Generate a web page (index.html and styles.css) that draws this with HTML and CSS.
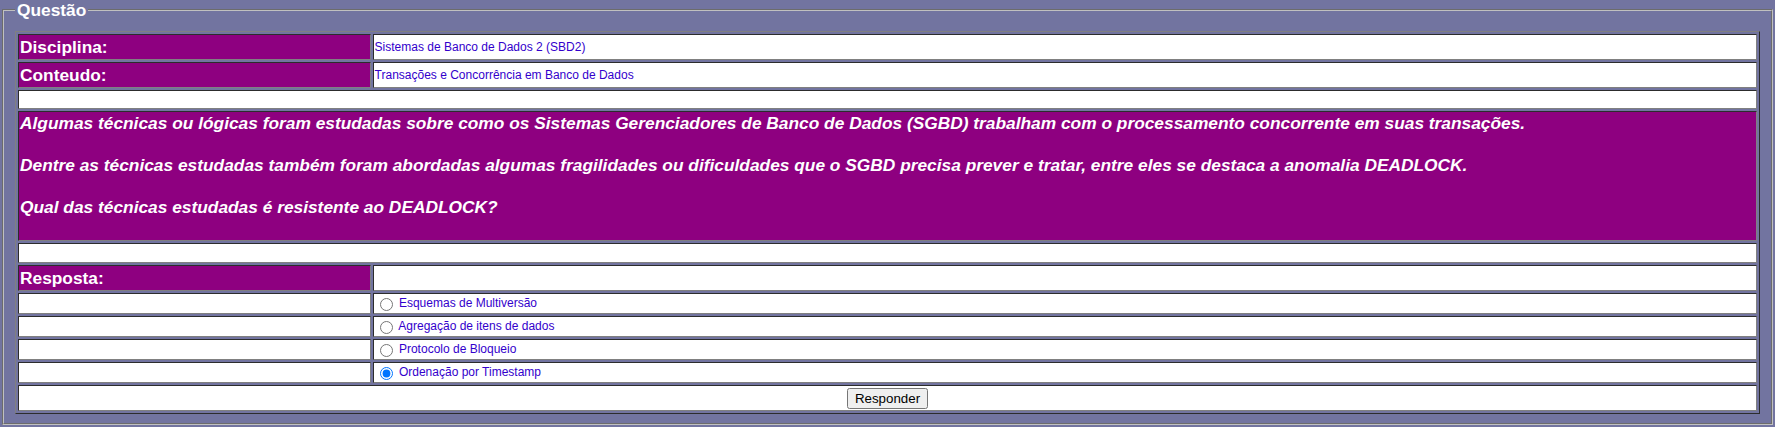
FILE: index.html
```html
<!DOCTYPE html>
<html lang="pt-BR">
<head>
<meta charset="utf-8">
<title>Questão</title>
<link rel="stylesheet" href="styles.css">
</head>
<body>
<fieldset class="box">
  <legend class="box-title">Questão</legend>
  <table class="quiz">
    <tr>
      <td class="lbl">Disciplina:</td>
      <td class="val">Sistemas de Banco de Dados 2 (SBD2)</td>
    </tr>
    <tr>
      <td class="lbl">Conteudo:</td>
      <td class="val">Transações e Concorrência em Banco de Dados</td>
    </tr>
    <tr>
      <td class="blank" colspan="2">&nbsp;</td>
    </tr>
    <tr>
      <td class="question" colspan="2">Algumas técnicas ou lógicas foram estudadas sobre como os Sistemas Gerenciadores de Banco de Dados (SGBD) trabalham com o processamento concorrente em suas transações.<br><br>Dentre as técnicas estudadas também foram abordadas algumas fragilidades ou dificuldades que o SGBD precisa prever e tratar, entre eles se destaca a anomalia DEADLOCK.<br><br>Qual das técnicas estudadas é resistente ao DEADLOCK?<br><br></td>
    </tr>
    <tr>
      <td class="blank blank-tall" colspan="2">&nbsp;</td>
    </tr>
    <tr>
      <td class="lbl">Resposta:</td>
      <td class="val"></td>
    </tr>
    <tr>
      <td class="empty"></td>
      <td class="opt"><label><input type="radio" name="resp" value="1"> Esquemas de Multiversão</label></td>
    </tr>
    <tr>
      <td class="empty"></td>
      <td class="opt"><label><input type="radio" name="resp" value="2"> Agregação de itens de dados</label></td>
    </tr>
    <tr>
      <td class="empty"></td>
      <td class="opt"><label><input type="radio" name="resp" value="3"> Protocolo de Bloqueio</label></td>
    </tr>
    <tr>
      <td class="empty"></td>
      <td class="opt"><label><input type="radio" name="resp" value="4" checked> Ordenação por Timestamp</label></td>
    </tr>
    <tr>
      <td class="actions" colspan="2"><button type="button" class="btn">Responder</button></td>
    </tr>
  </table>
</fieldset>
</body>
</html>
```

FILE: styles.css
```css
html, body {
  margin: 0;
  padding: 0;
  background: #7274a0;
  font-family: "Liberation Sans", Arial, sans-serif;
}

.box {
  margin: 0 2px;
  border: 2px groove #c0c0c0;
  padding: 11px 11px 9px;
  font-size: 16px;
}

.box-title {
  color: #ffffff;
  font-weight: bold;
  font-size: 13pt;
  line-height: 20px;
  padding: 0 2px;
}

.quiz {
  width: 100%;
  border: 1px outset gray;
  border-spacing: 2px;
}

.quiz td {
  border: 1px inset gray;
  padding: 1px;
  background: #ffffff;
}

.quiz td.lbl {
  width: 20.3%;
  background: #8e0080;
  color: #ffffff;
  font-weight: bold;
  font-size: 13pt;
  line-height: 22px;
}

.val {
  color: #3300cc;
  font-size: 12px;
  line-height: 22px;
}

.blank {
  font-size: 12px;
  line-height: 15px;
}

.blank-tall {
  line-height: 16px;
}

.quiz td.question {
  background: #8e0080;
  color: #ffffff;
  font-weight: bold;
  font-style: italic;
  font-size: 13pt;
  line-height: 21px;
}

.quiz td.opt {
  color: #3300cc;
  font-size: 12px;
  line-height: 14px;
  padding: 1px 1px 2px;
}

.quiz td.empty {
  padding: 1px;
}

.opt input {
  margin: 3px 3px 0 5px;
  vertical-align: -4px;
}

.quiz td.actions {
  text-align: center;
  line-height: 0;
  padding: 2px 1px 1px;
}

.btn {
  font-family: "Liberation Sans", Arial, sans-serif;
  font-size: 13.33px;
  line-height: normal;
  margin: 0;
}
```
